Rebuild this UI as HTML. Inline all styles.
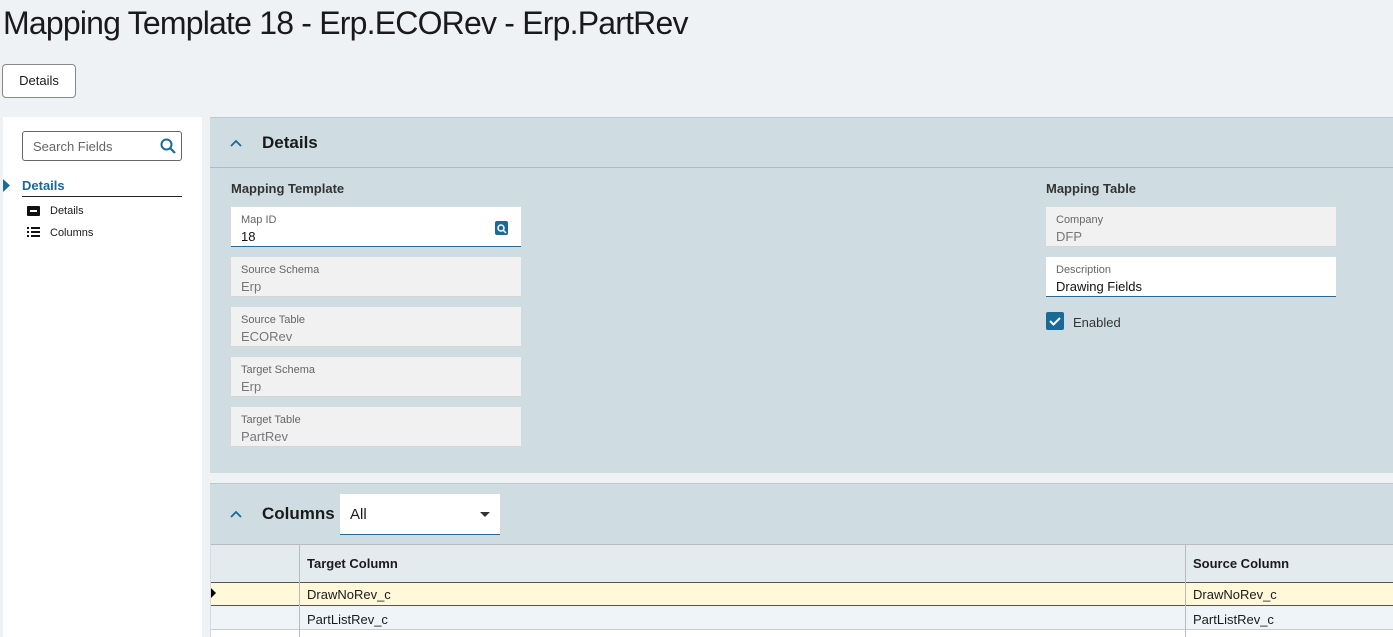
<!DOCTYPE html>
<html><head><meta charset="utf-8"><style>
*{box-sizing:border-box;margin:0;padding:0}
body{width:1393px;height:637px;overflow:hidden;background:#eef2f5;font-family:"Liberation Sans",sans-serif;position:relative;color:#1a1a1a}
.a{position:absolute}
h1{position:absolute;left:3px;top:5px;font-size:32px;font-weight:400;letter-spacing:-0.8px}
.btn{left:2px;top:64px;width:74px;height:34px;border:1px solid #888;border-radius:4px;background:#fff;font-size:13px;text-align:center;line-height:32px}
.side{left:3px;top:117px;width:199px;height:520px;background:#fff}
.search{left:22px;top:131px;width:160px;height:30px;border:1px solid #666;border-radius:3px;font-size:13px;color:#666;padding:7px 10px}
.panel{background:#cfdde2;border-top:1px solid #b9cad1}
.f{position:absolute;width:290px;height:40px;background:#f1f1f1;border-bottom:1px solid #d5d5d5;padding:7px 10px 0}
.f .l{font-size:11px;color:#666}
.f .v{font-size:13px;color:#777;margin-top:3px}
.f.w{background:#fff;border-bottom:1px solid #2a6a90}
.f.w .v{color:#111}
.lbl{font-size:13px;font-weight:bold;color:#333}
.cell{position:absolute;font-size:13px;padding-left:8px}
</style></head><body>
<h1>Mapping Template 18 - Erp.ECORev - Erp.PartRev</h1>
<div class="a btn">Details</div>
<div class="a side"></div>
<div class="a search">Search Fields
<svg class="a" style="left:137px;top:6px" width="16" height="16" viewBox="0 0 16 16"><circle cx="6.5" cy="6.5" r="5" fill="none" stroke="#1a6a96" stroke-width="2"/><path d="M10 10l5 5" stroke="#1a6a96" stroke-width="2.2"/></svg></div>
<svg class="a" style="left:3px;top:179px" width="8" height="13"><path d="M0 0l7 6.5-7 6.5z" fill="#1a6a96"/></svg>
<div class="a" style="left:22px;top:178px;font-size:13px;font-weight:bold;color:#1a6a96">Details</div>
<div class="a" style="left:22px;top:196px;width:160px;height:1px;background:#222"></div>
<div class="a" style="left:27px;top:206px;width:13px;height:10px;background:#111;border-radius:1px"><div class="a" style="left:3px;top:4px;width:7px;height:1.5px;background:#fff"></div></div>
<div class="a" style="left:50px;top:205px;font-size:11px">Details</div>
<svg class="a" style="left:27px;top:227px" width="13" height="11"><path d="M0 1h2M0 5h2M0 9h2M4 1h9M4 5h9M4 9h9" stroke="#111" stroke-width="2"/></svg>
<div class="a" style="left:50px;top:227px;font-size:11px">Columns</div>

<div class="a panel" style="left:210px;top:117px;width:1183px;height:356px"></div>
<div class="a" style="left:210px;top:167px;width:1183px;height:1px;background:#a9bec7"></div>
<svg class="a" style="left:230px;top:139px" width="12" height="8"><path d="M1 7l5-5 5 5" fill="none" stroke="#1a6a96" stroke-width="1.8"/></svg>
<div class="a" style="left:262px;top:133px;font-size:17px;font-weight:bold">Details</div>
<div class="a lbl" style="left:231px;top:181px">Mapping Template</div>
<div class="f w" style="left:231px;top:207px"><div class="l">Map ID</div><div class="v">18</div>
<svg class="a" style="left:264px;top:14px" width="13" height="14"><rect width="13" height="14" rx="2" fill="#1a6a96"/><circle cx="6" cy="7" r="3" fill="none" stroke="#fff" stroke-width="1.5"/><path d="M8 9l3 3" stroke="#fff" stroke-width="1.5"/></svg></div>
<div class="f" style="left:231px;top:257px"><div class="l">Source Schema</div><div class="v">Erp</div></div>
<div class="f" style="left:231px;top:307px"><div class="l">Source Table</div><div class="v">ECORev</div></div>
<div class="f" style="left:231px;top:357px"><div class="l">Target Schema</div><div class="v">Erp</div></div>
<div class="f" style="left:231px;top:407px"><div class="l">Target Table</div><div class="v">PartRev</div></div>
<div class="a lbl" style="left:1046px;top:181px">Mapping Table</div>
<div class="f" style="left:1046px;top:207px"><div class="l">Company</div><div class="v">DFP</div></div>
<div class="f w" style="left:1046px;top:257px"><div class="l">Description</div><div class="v">Drawing Fields</div></div>
<div class="a" style="left:1046px;top:312px;width:18px;height:18px;background:#1a6a96;border-radius:2px"><svg width="18" height="18"><path d="M4 9l3.5 3.5L14 6" fill="none" stroke="#fff" stroke-width="2"/></svg></div>
<div class="a" style="left:1073px;top:315px;font-size:13px;color:#333">Enabled</div>

<div class="a panel" style="left:210px;top:483px;width:1183px;height:154px"></div>
<svg class="a" style="left:230px;top:510px" width="12" height="8"><path d="M1 7l5-5 5 5" fill="none" stroke="#1a6a96" stroke-width="1.8"/></svg>
<div class="a" style="left:262px;top:504px;font-size:17px;font-weight:bold">Columns</div>
<div class="a" style="left:340px;top:494px;width:160px;height:41px;background:#fff;border-bottom:1px solid #2a6a90;font-size:15px;padding:12px 10px">All
<svg class="a" style="left:140px;top:18px" width="10" height="6"><path d="M0 0h10L5 5z" fill="#333"/></svg></div>
<div class="a" style="left:211px;top:544px;width:1182px;height:38px;background:#e4ebee;border-top:1px solid #bbb"></div>
<div class="a" style="left:211px;top:582px;width:1182px;height:24px;background:#fff9da;border-top:1px solid #555;border-bottom:1px solid #555"></div>
<div class="a" style="left:211px;top:606px;width:1182px;height:24px;background:#eef4f7;border-bottom:1px solid #ccc"></div>
<div class="a" style="left:211px;top:630px;width:1182px;height:7px;background:#fff"></div>
<div class="a" style="left:299px;top:544px;width:1px;height:93px;background:#bbb"></div>
<div class="a" style="left:1185px;top:544px;width:1px;height:93px;background:#bbb"></div>
<svg class="a" style="left:211px;top:588px" width="5" height="10"><path d="M0 0l5 5-5 5z" fill="#000"/></svg>
<div class="cell" style="left:299px;top:556px;font-weight:bold">Target Column</div>
<div class="cell" style="left:1185px;top:556px;font-weight:bold">Source Column</div>
<div class="cell" style="left:299px;top:587px">DrawNoRev_c</div>
<div class="cell" style="left:1185px;top:587px">DrawNoRev_c</div>
<div class="cell" style="left:299px;top:612px">PartListRev_c</div>
<div class="cell" style="left:1185px;top:612px">PartListRev_c</div>
</body></html>
